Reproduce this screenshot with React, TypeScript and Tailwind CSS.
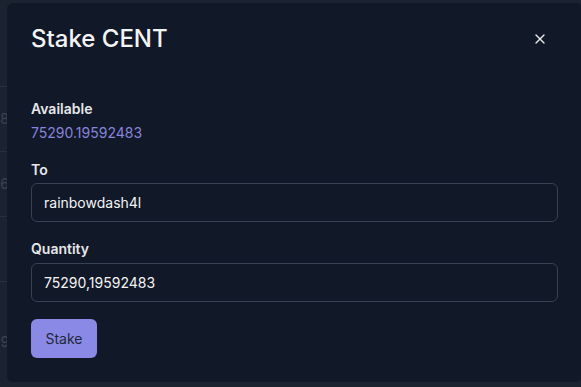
import React, { useState } from 'react';
import { X } from 'lucide-react';

const rows = [
  { h: 'h-[87px]', text: '' },
  { h: 'h-[65px]', text: '0.8' },
  { h: 'h-[65px]', text: '0.67' },
  { h: 'h-[65px]', text: '' },
  { h: 'h-[120px]', text: '0.9' },
];

export default function App() {
  const [to, setTo] = useState('rainbowdash4l');
  const [quantity, setQuantity] = useState('75290,19592483');

  return (
    <div
      className="relative h-[387px] w-[581px] overflow-hidden bg-[#1b2331]"
      style={{ fontFamily: 'Inter, "Noto Sans", sans-serif' }}
    >
      {/* page behind the dialog */}
      <div className="flex flex-col">
        {rows.map((row, i) => (
          <div key={i} className={`${row.h} flex items-center border-b border-[#253040]`}>
            <span className="-ml-[12px] text-sm text-[#3b4453]">{row.text}</span>
          </div>
        ))}
      </div>

      {/* dialog */}
      <div className="absolute left-[7px] top-[3px] flex h-[379px] w-[575px] flex-col rounded-md bg-[#111827] px-6 pt-5 pb-6">
        <div className="flex items-center justify-between">
          <h2 className="text-2xl font-medium text-gray-100">Stake CENT</h2>
          <button type="button" className="mr-[10px] text-gray-200">
            <X size={16} strokeWidth={2} />
          </button>
        </div>

        <div className="mt-[44px]">
          <div className="text-sm font-semibold text-gray-200">Available</div>
          <div className="mt-1 text-sm text-[#8784dc]">75290.19592483</div>
        </div>

        <label className="mt-[17px] text-sm font-semibold text-gray-200">To</label>
        <input
          type="text"
          value={to}
          onChange={(e) => setTo(e.target.value)}
          className="mt-[3px] h-[39px] w-full rounded-md border border-gray-700 bg-transparent px-3 text-sm text-gray-100 outline-none"
        />

        <label className="mt-[17px] text-sm font-semibold text-gray-200">Quantity</label>
        <input
          type="text"
          value={quantity}
          onChange={(e) => setQuantity(e.target.value)}
          className="mt-1 h-[39px] w-full rounded-md border border-gray-700 bg-transparent px-3 text-sm text-gray-100 outline-none"
        />

        <div className="mt-[17px]">
          <button
            type="button"
            className="h-[39px] w-[66px] rounded-md bg-[#8b89e6] text-sm text-gray-800"
          >
            Stake
          </button>
        </div>
      </div>
    </div>
  );
}
